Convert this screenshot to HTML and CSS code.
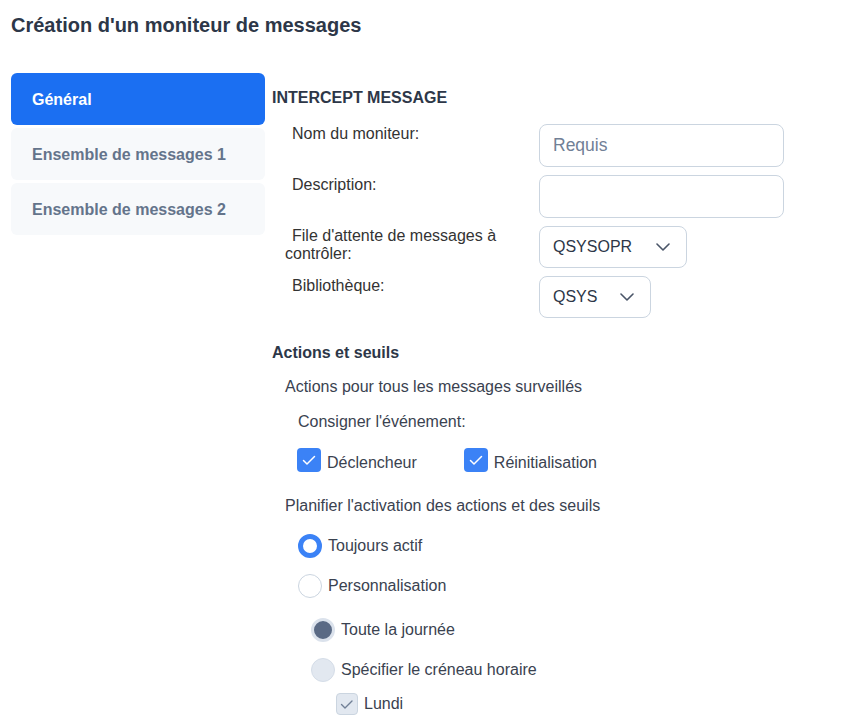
FILE: index.html
```html
<!DOCTYPE html>
<html lang="fr">
<head>
  <meta charset="UTF-8">
  <meta name="viewport" content="width=device-width, initial-scale=1.0">
  <title>Création d'un moniteur de messages</title>
  <link rel="stylesheet" href="styles.css">
</head>
<body>
  <div class="page">
    <h1 class="title">Création d'un moniteur de messages</h1>
    <div class="layout">
      <ul class="tabs">
        <li class="tab active">Général</li>
        <li class="tab">Ensemble de messages 1</li>
        <li class="tab">Ensemble de messages 2</li>
      </ul>

      <div class="content">
        <h2 class="section">INTERCEPT MESSAGE</h2>
        <div class="form">
          <div class="row">
            <label class="label">Nom du moniteur:</label>
            <div class="input placeholder">Requis</div>
          </div>
          <div class="row">
            <label class="label">Description:</label>
            <div class="input"></div>
          </div>
          <div class="row">
            <label class="label">File d'attente de messages à contrôler:</label>
            <div class="select wide">QSYSOPR
              <svg class="chev" width="14" height="8" viewBox="0 0 14 8"><path d="M1 1l6 6 6-6" fill="none" stroke="#4a5568" stroke-width="1.6" stroke-linecap="round" stroke-linejoin="round"/></svg>
            </div>
          </div>
          <div class="row">
            <label class="label">Bibliothèque:</label>
            <div class="select narrow">QSYS
              <svg class="chev" width="14" height="8" viewBox="0 0 14 8"><path d="M1 1l6 6 6-6" fill="none" stroke="#4a5568" stroke-width="1.6" stroke-linecap="round" stroke-linejoin="round"/></svg>
            </div>
          </div>
        </div>

        <h3 class="subsection">Actions et seuils</h3>
        <p class="line lvl1 g-actions">Actions pour tous les messages surveillés</p>
        <p class="line lvl2 g-log">Consigner l'événement:</p>
        <div class="checks">
          <span class="opt"><span class="box on"><svg width="24" height="24" viewBox="0 0 24 24"><path d="M6.5 12.5l3.5 3.5 7.5-7.5" fill="none" stroke="#fff" stroke-width="1.5" stroke-linecap="round" stroke-linejoin="round"/></svg></span><span class="txt">Déclencheur</span></span>
          <span class="opt"><span class="box on"><svg width="24" height="24" viewBox="0 0 24 24"><path d="M6.5 12.5l3.5 3.5 7.5-7.5" fill="none" stroke="#fff" stroke-width="1.5" stroke-linecap="round" stroke-linejoin="round"/></svg></span><span class="txt">Réinitialisation</span></span>
        </div>
        <p class="line lvl1 g-plan">Planifier l'activation des actions et des seuils</p>
        <div class="opt lvl2 g-always"><span class="radio selected"></span>Toujours actif</div>
        <div class="opt lvl2 g-custom"><span class="radio"></span>Personnalisation</div>
        <div class="opt lvl3 g-day"><span class="radio disabled-on"></span>Toute la journée</div>
        <div class="opt lvl3 g-slot"><span class="radio disabled"></span>Spécifier le créneau horaire</div>
        <div class="opt lvl4 g-monday"><span class="box small off"><svg width="22" height="22" viewBox="0 0 22 22"><path d="M5.5 11.5l3.5 3.5 7-7" fill="none" stroke="#718096" stroke-width="1.4" stroke-linecap="round" stroke-linejoin="round"/></svg></span>Lundi</div>
      </div>
    </div>
  </div>
</body>
</html>
```

FILE: styles.css
```css
body,h1,h2,h3,p,ul,li{margin:0;padding:0}
ul{list-style:none}
body{font:16px/20px "Liberation Sans", Arial, sans-serif;color:#3a4250;background:#fff}

.page {
  padding: 13px 11px 0;
}
.title {
  font-size: 20px;
  line-height: 24px;
  font-weight: bold;
  color: #2d3748;
}
.layout {
  display: flex;
  gap: 7px;
  margin-top: 36px;
}

/* onglets */
.tabs {
  width: 254px;
  flex: none;
  display: flex;
  flex-direction: column;
  gap: 3px;
}
.tab {
  height: 52px;
  line-height: 54px;
  padding-left: 21px;
  border-radius: 6px;
  background: #f7f9fb;
  color: #64748b;
  font-weight: bold;
}
.tab.active {
  background: #1b6ff2;
  color: #fff;
}

/* formulaire */
.content {
  flex: 1;
  padding-top: 15px;
}
.section {
  font-size: 16px;
  font-weight: bold;
  color: #2d3748;
}
.form {
  margin-top: 16px;
  display: flex;
  flex-direction: column;
  gap: 8px;
}
.row {
  display: grid;
  grid-template-columns: 267px auto;
  align-items: start;
}
.label {
  width: 241px;
  padding-left: 13px;
  text-indent: 7px;
  line-height: 18px;
  padding-top: 1px;
  color: #333;
}
.input,
.select {
  height: 41px;
  border: 1px solid #cbd5e0;
  border-radius: 8px;
  box-sizing: content-box;
  padding: 0 13px;
  line-height: 41px;
  color: #2d3748;
}
.input {
  width: 217px;
}
.placeholder {
  color: #718096;
  font-size: 17.5px;
}
.select {
  height: 40px;
  line-height: 40px;
  display: flex;
  justify-content: space-between;
  align-items: center;
  padding-right: 16px;
}
.select.wide {
  width: 117px;
}
.select.narrow {
  width: 81px;
}

.subsection {
  margin-top: 25px;
  font-size: 16px;
  font-weight: bold;
  color: #2d3748;
}
.lvl1 { padding-left: 13px; }
.lvl2 { padding-left: 26px; }
.lvl3 { padding-left: 39px; }
.lvl4 { padding-left: 64px; }

.g-actions { margin-top: 14px; }
.g-log { margin-top: 15px; }
.checks {
  margin-top: 16px;
  padding-left: 25px;
  display: flex;
  gap: 47px;
}
.checks .txt {
  margin-top: 3px;
  margin-bottom: -3px;
}
.g-plan { margin-top: 24px; }
.g-always { margin-top: 18px; }
.g-custom { margin-top: 16px; }
.g-day { margin-top: 20px; }
.g-slot { margin-top: 16px; }
.g-monday { margin-top: 10px; }

.opt {
  display: flex;
  align-items: center;
  gap: 6px;
  line-height: 24px;
}
.box {
  width: 24px;
  height: 24px;
  border-radius: 4px;
  box-sizing: border-box;
  display: flex;
}
.box.on {
  background: #3b82f6;
}
.box.small {
  width: 22px;
  height: 22px;
}
.box.off {
  background: #e2e8f0;
  border: 1px solid #cbd5e0;
}
.box.off svg {
  margin: -1px;
}
.radio {
  width: 24px;
  height: 24px;
  border-radius: 50%;
  box-sizing: border-box;
  border: 1px solid #cbd5e0;
  background: #fff;
}
.radio.selected {
  border: 5px solid #3b82f6;
}
.radio.disabled-on {
  background: #5a6a85;
  border: 3px solid #dbe2ec;
}
.radio.disabled {
  background: #e2e8f0;
  border-color: #d5dde8;
}
```
